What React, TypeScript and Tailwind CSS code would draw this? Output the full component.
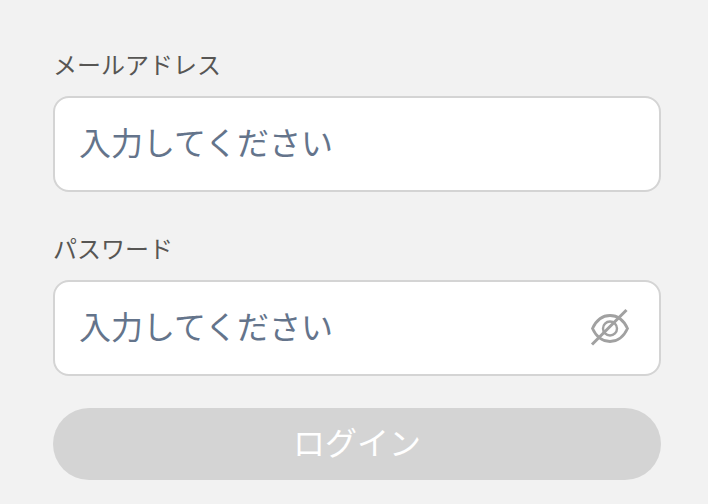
function EyeSlash() {
  return (
    <svg width="40" height="40" viewBox="0 0 40 40" fill="none" stroke="#a1a1a1" strokeWidth="2.800" strokeLinecap="round">
      <path d="M2.500 20.500C6.500 11.800 12.300 7.500 20 7.500S33.500 11.800 37.500 20.500C33.500 29.200 27.700 33.500 20 33.500S6.500 29.200 2.500 20.500Z" />
      <circle cx="20" cy="20.500" r="7" strokeWidth="2.400" />
      <path d="M2 36.500L36.500 2" strokeWidth="3" strokeLinecap="butt" />
    </svg>
  );
}

function Field({ label, eye }: { label: string; eye?: boolean }) {
  return (
    <div className="flex flex-col gap-[12px]">
      <label className="text-[24px] leading-[36px] text-[#575654]">{label}</label>
      <div className="flex h-[96px] items-center justify-between rounded-[16px] border-2 border-[#d4d4d4] bg-white pl-[24px] pr-[29px]">
        <span className="text-[32px] leading-[40px] text-[#64748b]">入力してください</span>
        {eye && <EyeSlash />}
      </div>
    </div>
  );
}

export default function App() {
  return (
    <div className="h-[504px] w-[708px] overflow-hidden bg-[#f2f2f2] pl-[53px] pr-[47px] pt-[48px] font-['Roboto','Noto_Sans_CJK_JP',sans-serif]">
      <div className="flex flex-col gap-[40px]">
        <Field label="メールアドレス" />
        <Field label="パスワード" eye />
      </div>
      <button className="mt-[32px] flex h-[72px] w-full items-center justify-center rounded-full bg-[#d4d4d4] text-[32px] text-white">
        ログイン
      </button>
    </div>
  );
}
